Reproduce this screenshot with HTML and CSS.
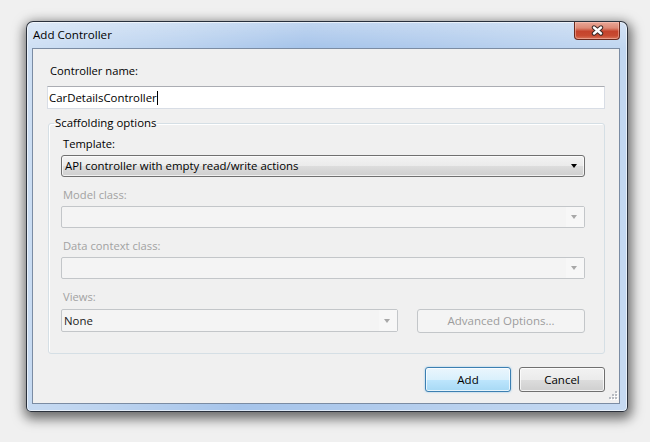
FILE: index.html
```html
<!DOCTYPE html>
<html>
<head>
<meta charset="utf-8">
<title>Add Controller</title>
<link rel="stylesheet" href="styles.css">
</head>
<body>
<div class="window">
  <div class="titlebar">
    <span class="title">Add Controller</span>
    <div class="close">
      <svg width="13" height="11" viewBox="0 0 13 11">
        <path d="M3 2.5 L10 8.5 M10 2.5 L3 8.5" stroke="#3b2a27" stroke-width="4.4" stroke-linecap="round" fill="none"/>
        <path d="M3 2.5 L10 8.5 M10 2.5 L3 8.5" stroke="#ffffff" stroke-width="2.4" stroke-linecap="round" fill="none"/>
      </svg>
    </div>
  </div>
  <div class="client">
    <div class="label">Controller name:</div>
    <div class="textbox"><span>CarDetailsController</span><span class="caret"></span></div>
    <fieldset class="group">
      <legend>Scaffolding options</legend>
      <div class="field">
        <div class="label">Template:</div>
        <div class="combo combo-active">
          <span class="combo-text">API controller with empty read/write actions</span>
          <span class="combo-btn"><span class="arrow"></span></span>
        </div>
      </div>
      <div class="field">
        <div class="label disabled">Model class:</div>
        <div class="combo combo-disabled">
          <span class="combo-text"></span>
          <span class="combo-btn"><span class="arrow"></span></span>
        </div>
      </div>
      <div class="field">
        <div class="label disabled">Data context class:</div>
        <div class="combo combo-disabled">
          <span class="combo-text"></span>
          <span class="combo-btn"><span class="arrow"></span></span>
        </div>
      </div>
      <div class="field">
        <div class="label disabled">Views:</div>
        <div class="views-row">
          <div class="combo combo-disabled combo-views">
            <span class="combo-text">None</span>
            <span class="combo-btn"><span class="arrow"></span></span>
          </div>
          <div class="btn btn-disabled">Advanced Options...</div>
        </div>
      </div>
    </fieldset>
    <div class="actions">
      <div class="btn btn-default">Add</div>
      <div class="btn">Cancel</div>
    </div>
    <div class="grip">
      <svg width="11" height="11" viewBox="0 0 11 11">
        <g fill="#ffffff">
          <rect x="9" y="1" width="2" height="2"/>
          <rect x="6" y="4" width="2" height="2"/><rect x="9" y="4" width="2" height="2"/>
          <rect x="3" y="7" width="2" height="2"/><rect x="6" y="7" width="2" height="2"/><rect x="9" y="7" width="2" height="2"/>
        </g>
        <g fill="#b8bcc2">
          <rect x="8" y="0" width="2" height="2"/>
          <rect x="5" y="3" width="2" height="2"/><rect x="8" y="3" width="2" height="2"/>
          <rect x="2" y="6" width="2" height="2"/><rect x="5" y="6" width="2" height="2"/><rect x="8" y="6" width="2" height="2"/>
        </g>
      </svg>
    </div>
  </div>
</div>
</body>
</html>
```

FILE: styles.css
```css
html, body {
  margin: 0;
  padding: 0;
}
body {
  background: #f0f0f0;
  font-family: "Open Sans", "Segoe UI", sans-serif;
  font-size: 11.2px;
  line-height: 16px;
  color: #000;
  width: 650px;
  height: 442px;
  overflow: hidden;
}
.window {
  margin: 21px 0 0 26px;
  width: 602px;
  height: 391px;
  box-sizing: border-box;
  padding: 0 7px 7px 5px;
  border: 1px solid rgba(24, 30, 40, 0.9);
  border-radius: 7px 7px 5px 5px;
  background:
    linear-gradient(180deg, rgba(255,255,255,0.3) 0px, rgba(255,255,255,0) 26px),
    linear-gradient(100deg, #cfe0f4 0%, #bcd3ef 22%, #a6c4ea 42%, #afcaec 60%, #bcd3ef 80%, #c6daf2 100%);
  box-shadow: 1px 4px 12px 3px rgba(0, 0, 0, 0.55), inset 0 0 0 1px rgba(255,255,255,0.6);
  display: flex;
  flex-direction: column;
}
.titlebar {
  height: 26px;
  flex: none;
  display: flex;
  justify-content: space-between;
  align-items: flex-start;
  padding-left: 1px;
}
.title {
  margin-top: 5px;
  font-size: 11.6px;
  color: #000;
}
.close {
  width: 46px;
  height: 18px;
  box-sizing: border-box;
  border: 1px solid #6a2a1e;
  border-top: none;
  border-radius: 0 0 4px 4px;
  background: linear-gradient(180deg, #e9a797 0%, #dd8a76 35%, #c5432c 55%, #c84a31 80%, #d9745a 100%);
  box-shadow: inset 0 0 0 1px rgba(255,210,200,0.45);
  display: flex;
  justify-content: center;
  align-items: center;
}
.client {
  position: relative;
  flex: 1;
  background: #f0f0f0;
  border: 1px solid #7b8ca3;
  padding: 14px 14px 0 14px;
  display: flex;
  flex-direction: column;
}
.label {
  height: 16px;
  padding-left: 3px;
}
.disabled {
  color: #a2a2a2;
}
.textbox {
  margin-top: 7px;
  height: 23px;
  box-sizing: border-box;
  background: #fff;
  border: 1px solid #d8dde5;
  border-top-color: #abadb3;
  display: flex;
  align-items: center;
  padding-left: 1px;
  font-size: 11.4px;
}
.caret {
  width: 1px;
  height: 14px;
  background: #000;
}
.group {
  margin: 6px 0 0 1px;
  border: 1px solid #d5dfe5;
  border-radius: 3px;
  padding: 0 19px 20px 12px;
  box-shadow: inset 1px 1px 0 #ffffff;
}
.group legend {
  margin-left: -7px;
  padding: 0 1px;
  line-height: 16px;
  font-size: 11.4px;
}
.field {
  display: flex;
  flex-direction: column;
}
.field + .field {
  margin-top: 10px;
}
.field:first-of-type {
  margin-top: 5px;
}
.field .label {
  margin-bottom: 3px;
  padding-left: 2px;
}
.combo {
  height: 22px;
  box-sizing: border-box;
  display: flex;
  align-items: stretch;
}
.combo-text {
  flex: 1;
  padding-left: 3px;
  display: flex;
  align-items: center;
  font-size: 11.4px;
}
.combo-btn {
  width: 18px;
  display: flex;
  justify-content: center;
  align-items: center;
}
.arrow {
  width: 0;
  height: 0;
  border-left: 3.5px solid transparent;
  border-right: 3.5px solid transparent;
  border-top: 4px solid #000;
  margin-left: -2px;
}
.combo-active {
  border: 1px solid #707070;
  border-radius: 3px;
  background: linear-gradient(180deg, #f3f3f3 0%, #ebebeb 50%, #dddddd 50%, #cfcfcf 100%);
  box-shadow: inset 0 0 0 1px rgba(255,255,255,0.7);
}
.combo-disabled {
  border: 1px solid #c3c6c9;
  border-radius: 2px;
  background: #f4f4f4;
}
.combo-disabled .combo-btn {
  background: #f7f7f7;
}
.combo-disabled .arrow {
  border-left-width: 3px;
  border-right-width: 3px;
  border-top: 4px solid #a8a8a8;
}
.views-row {
  display: flex;
  align-items: flex-start;
  gap: 19px;
  margin-top: 1px;
}
.combo-views {
  width: 337px;
  height: 23px;
  flex: none;
}
.combo-views .combo-text {
  color: #1a1a1a;
  padding-left: 2px;
}
.btn {
  height: 25px;
  width: 86px;
  box-sizing: border-box;
  border: 1px solid #707070;
  border-radius: 3px;
  background: linear-gradient(180deg, #f2f2f2 0%, #ebebeb 50%, #dddddd 50%, #cfcfcf 100%);
  box-shadow: inset 0 0 0 1px rgba(255,255,255,0.75);
  display: flex;
  justify-content: center;
  align-items: center;
  font-size: 11.5px;
}
.btn-disabled {
  flex: 1;
  width: auto;
  height: 24px;
  border-color: #c3c6c9;
  background: #f4f4f4;
  box-shadow: none;
  color: #9c9c9c;
}
.btn-default {
  border-color: #3c7fb1;
  background: linear-gradient(180deg, #eaf6fd 0%, #d9f0fc 50%, #bee6fd 50%, #a7d9f5 100%);
  box-shadow: inset 0 0 0 1px rgba(255,255,255,0.7), 0 0 2px rgba(60,160,230,0.6);
}
.actions {
  margin-top: 13px;
  display: flex;
  justify-content: flex-end;
  gap: 8px;
}
.grip {
  position: absolute;
  right: 1px;
  bottom: 1px;
  width: 11px;
  height: 11px;
  line-height: 0;
}
```
